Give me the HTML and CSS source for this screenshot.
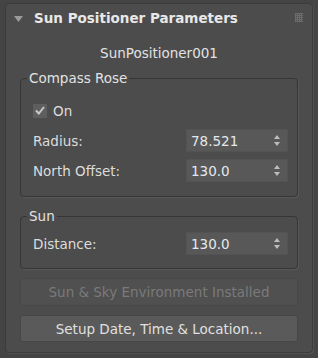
FILE: index.html
```html
<!DOCTYPE html>
<html>
<head>
<meta charset="utf-8">
<link rel="stylesheet" href="styles.css">
</head>
<body>
<div class="panel">
  <div class="title">
    <svg class="tri" width="9" height="6" viewBox="0 0 9 6"><path d="M0 0H9L4.5 6Z" fill="#9a9a9a"/></svg>
    <span class="title-text">Sun Positioner Parameters</span>
    <svg class="grip" width="8" height="9" viewBox="0 0 8 9">
      <g fill="#6c6c6c">
        <rect x="0" y="0" width="8" height="1"/><rect x="0" y="2" width="8" height="1"/><rect x="0" y="4" width="8" height="1"/><rect x="0" y="6" width="8" height="1"/><rect x="0" y="8" width="8" height="1"/>
        <rect x="0" y="0" width="1" height="9"/><rect x="2" y="0" width="1" height="9"/><rect x="4" y="0" width="1" height="9"/><rect x="6" y="0" width="1" height="9"/>
      </g>
    </svg>
  </div>
  <div class="body">
    <div class="name">SunPositioner001</div>
    <fieldset class="group compass">
      <legend>Compass Rose</legend>
      <div class="row check-row">
        <span class="checkbox"><svg width="10" height="9" viewBox="0 0 10 9"><path d="M1 4.5L3.8 7.5L9 1" fill="none" stroke="#c8c8c8" stroke-width="2"/></svg></span>
        <span class="label">On</span>
      </div>
      <div class="row">
        <span class="label">Radius:</span>
        <div class="spinner"><span>78.521</span><svg width="6" height="11" viewBox="0 0 6 11"><path d="M0 4H6L3 0Z M0 7H6L3 11Z" fill="#bdbdbd"/></svg></div>
      </div>
      <div class="row">
        <span class="label">North Offset:</span>
        <div class="spinner"><span>130.0</span><svg width="6" height="11" viewBox="0 0 6 11"><path d="M0 4H6L3 0Z M0 7H6L3 11Z" fill="#bdbdbd"/></svg></div>
      </div>
    </fieldset>
    <fieldset class="group sun">
      <legend>Sun</legend>
      <div class="row">
        <span class="label">Distance:</span>
        <div class="spinner"><span>130.0</span><svg width="6" height="11" viewBox="0 0 6 11"><path d="M0 4H6L3 0Z M0 7H6L3 11Z" fill="#bdbdbd"/></svg></div>
      </div>
    </fieldset>
    <button class="btn disabled">Sun &amp; Sky Environment Installed</button>
    <button class="btn">Setup Date, Time &amp; Location...</button>
  </div>
</div>
</body>
</html>
```
FILE: styles.css
```css
html, body {
  margin: 0;
  padding: 0;
  background: #444444;
  width: 318px;
  height: 358px;
  overflow: hidden;
}
body {
  font-family: "DejaVu Sans", sans-serif;
  font-size: 13.5px;
  color: #dcdcdc;
}
.panel {
  margin: 3px 5px 0;
  height: 350px;
  box-sizing: border-box;
  border: 1px solid #3b3b3b;
  border-radius: 4px;
  background: #4c4c4c;
  box-shadow: 1px 1px 0 #525252;
}
.title {
  height: 28px;
  display: flex;
  align-items: center;
  padding: 0 9px 0 8px;
}
.tri {
  flex: none;
  margin-top: 1px;
}
.title-text {
  margin-left: 11px;
  font-weight: bold;
  color: #e8e8e8;
  flex: 1;
}
.grip {
  flex: none;
  margin-top: -1px;
}
.body {
  padding: 0 14px;
  display: flex;
  flex-direction: column;
}
.name {
  height: 20px;
  line-height: 20px;
  text-align: center;
  margin-top: 11px;
  color: #e2e2e2;
}
.group {
  margin: 0;
  border: 1px solid #363636;
  border-radius: 4px;
  box-shadow: 1px 1px 0 #575757;
  padding: 14px 9px 14px 12px;
  display: flex;
  flex-direction: column;
  gap: 7px;
}
.group legend {
  padding: 0 2px;
  margin-left: -6px;
  line-height: 14px;
  color: #e2e2e2;
}
.compass {
  margin-top: 8px;
}
.sun {
  margin-top: 12px;
  padding-top: 9px;
  padding-bottom: 13px;
}
.row {
  height: 23px;
  display: flex;
  align-items: center;
  justify-content: space-between;
}
.check-row {
  justify-content: flex-start;
}
.checkbox {
  width: 14px;
  height: 14px;
  background: #5e5e5e;
  display: flex;
  align-items: center;
  justify-content: center;
  margin-right: 6px;
}
.spinner {
  width: 102px;
  height: 23px;
  box-sizing: border-box;
  background: #585858;
  border: 1px solid #535353;
  display: flex;
  align-items: center;
  justify-content: space-between;
  padding: 0 7px 0 4px;
  color: #e4e8ee;
}
.btn {
  font-family: "DejaVu Sans", sans-serif;
  font-size: 13.5px;
  border: 1px solid #474747;
  border-radius: 3px;
  background: #5a5a5a;
  color: #e0e0e0;
  height: 27px;
  padding: 0;
  margin-top: 9px;
}
.btn.disabled {
  height: 28px;
  margin-top: 9px;
  background: #505050;
  color: #7a7a7a;
}
```
